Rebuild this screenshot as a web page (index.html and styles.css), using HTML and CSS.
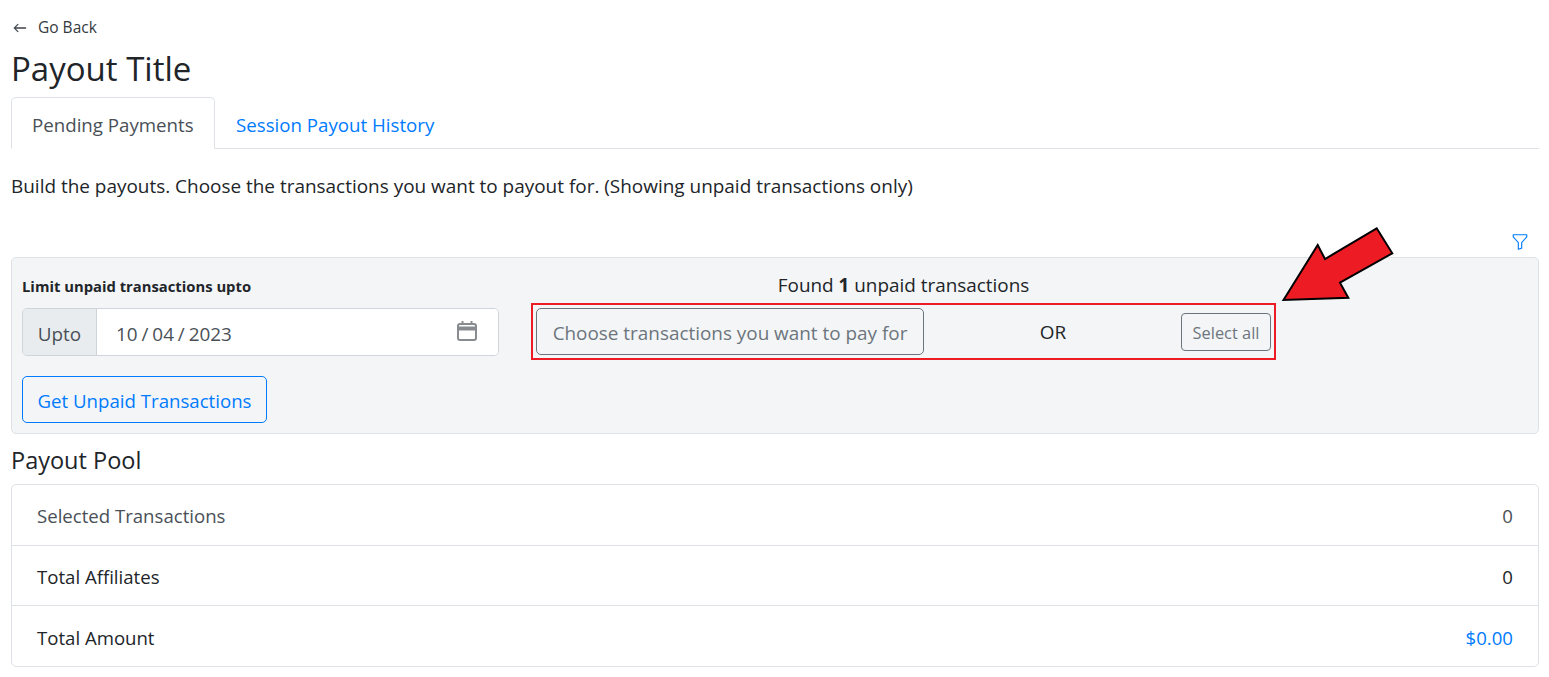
FILE: index.html
```html
<!DOCTYPE html>
<html lang="en">
<head>
    <meta charset="UTF-8">
    <meta name="viewport" content="width=device-width, initial-scale=1.0">
    <title>Payout Title</title>
    <link rel="stylesheet" href="styles.css">
</head>
<body>
    <div class="container">
        <a class="back-link" href="#">
            <svg class="back-icon" width="14" height="14" viewBox="0 0 16 16" fill="currentColor" stroke="currentColor" stroke-width="0.5"><path fill-rule="evenodd" d="M15 8a.5.5 0 0 0-.5-.5H2.707l3.147-3.146a.5.5 0 1 0-.708-.708l-4 4a.5.5 0 0 0 0 .708l4 4a.5.5 0 0 0 .708-.708L2.707 8.5H14.5A.5.5 0 0 0 15 8z"/></svg>
            <span>Go Back</span>
        </a>
        <h1>Payout Title</h1>

        <ul class="tabs">
            <li class="tab active">Pending Payments</li>
            <li class="tab">Session Payout History</li>
        </ul>

        <p class="intro">Build the payouts. Choose the transactions you want to payout for. (Showing unpaid transactions only)</p>

        <div class="filter-row">
            <svg width="18" height="18" viewBox="0 0 16 16" fill="#007bff"><path d="M1.5 1.5A.5.5 0 0 1 2 1h12a.5.5 0 0 1 .5.5v2a.5.5 0 0 1-.128.334L10 8.692V13.5a.5.5 0 0 1-.342.474l-3 1A.5.5 0 0 1 6 14.5V8.692L1.628 3.834A.5.5 0 0 1 1.5 3.5v-2zm1 .5v1.308l4.372 4.858A.5.5 0 0 1 7 8.5v5.306l2-.666V8.5a.5.5 0 0 1 .128-.334L13.5 3.308V2h-11z"/></svg>
        </div>

        <!-- Unpaid transactions filter -->
        <div class="panel">
            <div class="panel-left">
                <label class="limit-label">Limit unpaid transactions upto</label>
                <div class="input-group">
                    <span class="input-prefix">Upto</span>
                    <div class="date-input">
                        <span>10 / 04 / 2023</span>
                        <svg width="20" height="20" viewBox="0 0 20 20" fill="none" stroke="#888c90" stroke-width="2"><rect x="1" y="3" width="18" height="16" rx="2"/><path d="M1 7.5h18" stroke-width="4"/><path d="M5.5 0v3M14.5 0v3"/></svg>
                    </div>
                </div>
                <button class="btn-get">Get Unpaid Transactions</button>
            </div>
            <div class="panel-right">
                <p class="found">Found <strong>1</strong> unpaid transactions</p>
                <div class="choose-box">
                    <button class="btn-choose">Choose transactions you want to pay for</button>
                    <span class="or">OR</span>
                    <button class="btn-select">Select all</button>
                </div>
            </div>
        </div>

        <h2>Payout Pool</h2>
        <ul class="pool">
            <li class="muted"><span>Selected Transactions</span><span>0</span></li>
            <li><span>Total Affiliates</span><span>0</span></li>
            <li><span>Total Amount</span><span class="amount">$0.00</span></li>
        </ul>

        <svg class="arrow" width="120" height="84" viewBox="1278 224 120 84"><polygon points="1283.5,300 1317.7,245 1325,259 1376.7,228.3 1392.3,253.3 1340,282.7 1348.3,297.7" fill="#ed1c24" stroke="#000" stroke-width="2"/></svg>
    </div>
</body>
</html>
```

FILE: styles.css
```css
* {
    box-sizing: border-box;
}

body {
    font-family: "Open Sans", "Noto Sans", Arial, sans-serif;
    font-size: 18.9px;
    color: #212529;
    background-color: #fff;
    margin: 0;
    padding: 0;
}

.container {
    position: relative;
    padding: 17px 10px 0 11px;
}

.back-link {
    display: flex;
    align-items: center;
    height: 20px;
    padding-left: 2px;
    gap: 11px;
    font-size: 15.5px;
    color: #343a40;
    text-decoration: none;
}

.back-icon {
    margin-top: 2px;
}

h1 {
    font-size: 33px;
    font-weight: 400;
    line-height: 46px;
    margin: 9px 0 5px;
}

.tabs {
    display: flex;
    list-style: none;
    margin: 0;
    padding: 0;
    height: 52px;
    border-bottom: 1px solid #dee2e6;
}

.tab {
    padding: 0 20px;
    height: 52px;
    font-size: 18.7px;
    line-height: 54px;
    color: #007bff;
    white-space: nowrap;
    border: 1px solid transparent;
}

.tab.active {
    width: 204px;
    color: #495057;
    background-color: #fff;
    border-color: #dee2e6 #dee2e6 #fff;
    border-radius: 5px 5px 0 0;
}

.intro {
    margin: 25px 0 0;
    font-size: 18.95px;
    line-height: 25px;
}

.filter-row {
    display: flex;
    justify-content: flex-end;
    margin-top: 34px;
    padding-right: 10px;
    height: 24px;
}

.panel {
    display: flex;
    gap: 32px;
    height: 177px;
    padding: 10px;
    background-color: #f4f5f7;
    border: 1px solid #dee2e6;
    border-radius: 5px;
}

.panel-left {
    width: 477px;
}

.limit-label {
    display: block;
    font-size: 14.8px;
    font-weight: 700;
    line-height: 20px;
    margin: 8px 0 12px;
}

.input-group {
    display: flex;
    height: 48px;
    border: 1px solid #ced4da;
    border-radius: 5px;
    overflow: hidden;
}

.input-prefix {
    width: 74px;
    line-height: 51px;
    text-align: center;
    color: #495057;
    background-color: #e9ecef;
    border-right: 1px solid #ced4da;
}

.date-input {
    flex: 1;
    display: flex;
    justify-content: space-between;
    align-items: center;
    padding: 0 21px 2px 19px;
    color: #495057;
    background-color: #fff;
}

.date-input span {
    padding-top: 6px;
    word-spacing: -1px;
}

.btn-get {
    display: block;
    width: 245px;
    height: 47px;
    margin-top: 20px;
    padding: 2px 0 0;
    font: inherit;
    font-size: 18.65px;
    color: #007bff;
    background: transparent;
    border: 1px solid #007bff;
    border-radius: 5px;
}

.panel-right {
    width: 745px;
}

.found {
    margin: 5px 0 5px;
    line-height: 25px;
    text-align: center;
}

.choose-box {
    display: flex;
    align-items: center;
    justify-content: space-between;
    height: 57px;
    padding: 0 3px;
    border: 2px solid #ed1c24;
}

.btn-choose {
    width: 388px;
    height: 47px;
    padding: 2px 0 0;
    font: inherit;
    color: #6c757d;
    background: transparent;
    border: 1px solid #6c757d;
    border-radius: 5px;
}

.or {
    color: #212529;
    margin-left: 1px;
}

.btn-select {
    width: 90px;
    height: 38px;
    padding: 2px 0 0;
    font-family: inherit;
    font-size: 16.4px;
    color: #6c757d;
    background: transparent;
    border: 1px solid #6c757d;
    border-radius: 4px;
}

h2 {
    font-size: 23.5px;
    font-weight: 400;
    line-height: 32px;
    margin: 10px 0 8px;
}

.pool {
    list-style: none;
    margin: 0;
    padding: 0;
    font-size: 18.6px;
    border: 1px solid #dee2e6;
    border-radius: 5px;
}

.pool li {
    display: flex;
    justify-content: space-between;
    align-items: center;
    height: 60px;
    padding: 2px 25px 0;
    border-top: 1px solid #dee2e6;
}

.pool li:first-child {
    padding-top: 0;
    border-top: none;
}

.pool li:last-child {
    height: 61px;
}

.pool li.muted {
    color: #495057;
}

.amount {
    color: #007bff;
}

.arrow {
    position: absolute;
    left: 1278px;
    top: 224px;
}
```
